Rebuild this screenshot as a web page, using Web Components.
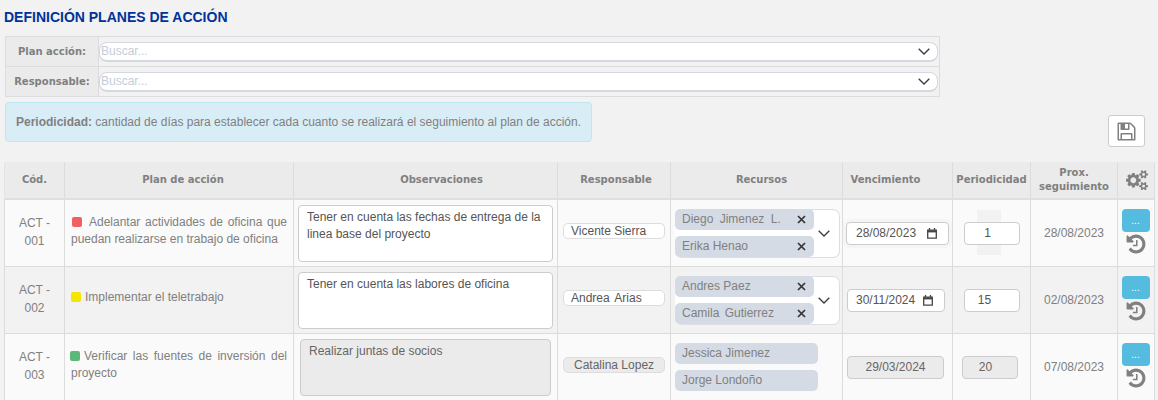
<!DOCTYPE html>
<html lang="es">
<head>
<meta charset="utf-8">
<title>Definición planes de acción</title>
<style>
  html, body { margin: 0; background: #f2f2f2; }
  body { font: 12px/17px "Liberation Sans", Arial, sans-serif; color: #808080; height: 400px; overflow: hidden; }
</style>
</head>
<body>
<plan-page>
  <span slot="title">DEFINICIÓN PLANES DE ACCIÓN</span>

  <filter-row slot="filters" label="Plan acción:"></filter-row>
  <filter-row slot="filters" label="Responsable:"></filter-row>

  <info-alert slot="alert"><b>Periodicidad:</b> cantidad de días para establecer cada cuanto se realizará el seguimiento al plan de acción.</info-alert>
  <save-button slot="save"></save-button>

  <plan-head slot="table"></plan-head>

  <plan-row slot="table">
    <span slot="cod">ACT -<br>001</span>
    <plan-text color="#f06060" gap="7" shift="1">Adelantar actividades de oficina que puedan realizarse en trabajo de oficina</plan-text>
    <obs-box slot="obs">Tener en cuenta las fechas de entrega de la linea base del proyecto</obs-box>
    <resp-box slot="resp">Vicente Sierra</resp-box>
    <chip-list slot="rec">
      <res-chip removable style="word-spacing:3px">Diego Jimenez L.</res-chip>
      <res-chip removable>Erika Henao</res-chip>
    </chip-list>
    <date-box slot="venc" style="box-shadow:0 0 0 3px #f5f5f5">28/08/2023</date-box>
    <num-box slot="per" patch>1</num-box>
    <span slot="prox">28/08/2023</span>
  </plan-row>

  <plan-row slot="table" alt>
    <span slot="cod">ACT -<br>002</span>
    <plan-text color="#f5e600" gap="4" shift="0">Implementar el teletrabajo</plan-text>
    <obs-box slot="obs">Tener en cuenta las labores de oficina</obs-box>
    <resp-box slot="resp" style="word-spacing:2px">Andrea Arias</resp-box>
    <chip-list slot="rec">
      <res-chip removable>Andres Paez</res-chip>
      <res-chip removable style="word-spacing:2px">Camila Gutierrez</res-chip>
    </chip-list>
    <date-box slot="venc" style="width:98px;margin-left:1px;padding-left:8px;padding-right:11px">30/11/2024</date-box>
    <num-box slot="per" style="padding-right:14px">15</num-box>
    <span slot="prox">02/08/2023</span>
  </plan-row>

  <plan-row slot="table">
    <span slot="cod">ACT -<br>003</span>
    <plan-text color="#5cb878" gap="4" shift="-1">Verificar las fuentes de inversión del proyecto</plan-text>
    <obs-box slot="obs" disabled>Realizar juntas de socios</obs-box>
    <resp-box slot="resp" disabled>Catalina Lopez</resp-box>
    <chip-list slot="rec" disabled>
      <res-chip>Jessica Jimenez</res-chip>
      <res-chip>Jorge Londoño</res-chip>
    </chip-list>
    <date-box slot="venc" disabled style="width:97px;margin-left:1px">29/03/2024</date-box>
    <num-box slot="per" disabled>20</num-box>
    <span slot="prox">07/08/2023</span>
  </plan-row>
</plan-page>

<script>
const HISTORY_PATH = 'M1664 896q0 156-61 298t-164 245-245 164-298 61q-172 0-327-72.5t-264-204.5q-7-10-6.5-22.5t8.5-20.5l137-138q10-9 25-9 16 2 23 12 73 95 179 147t225 52q104 0 198.5-40.5t163.5-109.5 109.5-163.5 40.5-198.5-40.5-198.5-109.5-163.5-163.5-109.5-198.5-40.5q-98 0-188 35.5t-160 101.5l137 138q31 30 14 69-17 40-59 40h-448q-26 0-45-19t-19-45v-448q0-42 40-59 39-17 69 14l130 129q107-101 244.5-156.5t284.5-55.5q156 0 298 61t245 164 164 245 61 298zm-640-288v448q0 14-9 23t-23 9h-320q-14 0-23-9t-9-23v-64q0-14 9-23t23-9h224v-352q0-14 9-23t23-9h64q14 0 23 9t9 23z'
const SAVE_PATH = 'M512 1536h768v-384h-768v384zm896 0h128v-896q0-14-10-38.5t-20-34.5l-281-281q-10-10-34-20t-39-10v416q0 40-28 68t-68 28h-576q-40 0-68-28t-28-68v-416h-128v1280h128v-416q0-40 28-68t68-28h832q40 0 68 28t28 68v416zm-384-928v-320q0-13-9.5-22.5t-22.5-9.5h-192q-13 0-22.5 9.5t-9.5 22.5v320q0 13 9.5 22.5t22.5 9.5h192q13 0 22.5-9.5t9.5-22.5zm640 32v928q0 40-28 68t-68 28h-1344q-40 0-68-28t-28-68v-1344q0-40 28-68t68-28h928q40 0 88 20t76 48l280 280q28 28 48 76t20 88z'
const COGS_PATH = 'M896 896q0-106-75-181t-181-75-181 75-75 181 75 181 181 75 181-75 75-181zm768 512q0-52-38-90t-90-38-90 38-38 90q0 53 37.5 90.5t90.5 37.5 90.5-37.5 37.5-90.5zm0-1024q0-52-38-90t-90-38-90 38-38 90q0 53 37.5 90.5t90.5 37.5 90.5-37.5 37.5-90.5zm-384 421v185q0 10-7 19.5t-16 10.5l-155 24q-11 35-32 76 34 48 90 115 7 11 7 20 0 12-7 19-23 30-82.5 89.5t-78.5 59.5q-11 0-21-7l-115-90q-37 19-77 31-11 108-23 155-7 24-30 24h-186q-11 0-20-7.5t-10-17.5l-23-153q-34-10-75-31l-118 89q-7 7-20 7-11 0-21-8-144-133-144-160 0-9 7-19 10-14 41-53t47-61q-23-44-35-82l-152-24q-10-1-17-9.5t-7-19.5v-185q0-10 7-19.5t16-10.5l155-24q11-35 32-76-34-48-90-115-7-11-7-20 0-12 7-20 22-30 82-89t79-59q11 0 21 7l115 90q34-18 77-32 11-108 23-154 7-24 30-24h186q11 0 20 7.5t10 17.5l23 153q34 10 75 31l118-89q8-7 20-7 11 0 21 8 144 133 144 160 0 8-7 19-12 16-42 54t-45 60q23 48 34 82l152 23q10 2 17 10.5t7 19.5zm640 533v140q0 16-149 31-12 27-30 52 51 113 51 138 0 4-4 7-122 71-124 71-8 0-46-47t-52-68q-20 2-30 2t-30-2q-14 21-52 68t-46 47q-2 0-124-71-4-3-4-7 0-25 51-138-18-25-30-52-149-15-149-31v-140q0-16 149-31 13-29 30-52-51-113-51-138 0-4 4-7 4-2 35-20t59-34 30-16q8 0 46 46.5t52 67.5q20-2 30-2t30 2q51-71 92-112l6-2q4 0 124 70 4 3 4 7 0 25-51 138 17 23 30 52 149 15 149 31zm0-1024v140q0 16-149 31-12 27-30 52 51 113 51 138 0 4-4 7-122 71-124 71-8 0-46-47t-52-68q-20 2-30 2t-30-2q-14 21-52 68t-46 47q-2 0-124-71-4-3-4-7 0-25 51-138-18-25-30-52-149-15-149-31v-140q0-16 149-31 13-29 30-52-51-113-51-138 0-4 4-7 4-2 35-20t59-34 30-16q8 0 46 46.5t52 67.5q20-2 30-2t30 2q51-71 92-112l6-2q4 0 124 70 4 3 4 7 0 25-51 138 17 23 30 52 149 15 149 31z'
const COLUMNS = '60px 229px 264px 113px 172px 110px 78px 87px 37px'
const CHEVRON = `<svg width="12" height="7" viewBox="0 0 12 7" fill="none" stroke="#3a3f47" stroke-width="1.4"><path d="M.7.8 6 6 11.3.8"/></svg>`

class PlanPage extends HTMLElement {
    constructor() {
        super()
        this.attachShadow({ mode: 'open' })
    }
    connectedCallback() {
        this.shadowRoot.innerHTML = /*html*/`
        <style>
            :host { display: block; padding: 8px 3px 0 4px; }
            .title { font: bold 14px/18px "Liberation Sans", Arial, sans-serif; color: #003399; }
            .filters { width: 935px; margin: 10px 0 5px 1px; border: 1px solid #dcdcdc; border-bottom: 0; box-sizing: border-box; }
            .bar { display: flex; justify-content: space-between; align-items: flex-start; margin-left: 1px; height: 60px; }
            .table { display: block; }
        </style>
        <div class="title"><slot name="title"></slot></div>
        <div class="filters"><slot name="filters"></slot></div>
        <div class="bar"><slot name="alert"></slot><slot name="save"></slot></div>
        <div class="table"><slot name="table"></slot></div>
        `
    }
}

class FilterRow extends HTMLElement {
    constructor() {
        super()
        this.attachShadow({ mode: 'open' })
    }
    connectedCallback() {
        this.shadowRoot.innerHTML = /*html*/`
        <style>
            :host { display: grid; grid-template-columns: 93px 1fr; height: 30px; border-bottom: 1px solid #dcdcdc; box-sizing: border-box; }
            .label { background: #ebebeb; border-right: 1px solid #dcdcdc; display: flex; align-items: center; justify-content: center;
                     font: bold 10px "DejaVu Sans", Verdana, sans-serif; color: #808080; }
            .cell { display: flex; align-items: center; padding-right: 1px; }
            .box { flex: 1; box-sizing: border-box; height: 20px; background: #fff; border: 1px solid #d5d8e0; border-width: 1px 1px 2px 1px; border-radius: 8px;
                   display: flex; align-items: center; justify-content: space-between; padding: 0 8px 0 1px; color: #c5ccd8; font-size: 12px; }
            .box svg { margin-right: -1px; }
        </style>
        <div class="label">${this.getAttribute('label')}</div>
        <div class="cell"><div class="box"><span>Buscar...</span>${CHEVRON}</div></div>
        `
    }
}

class InfoAlert extends HTMLElement {
    constructor() {
        super()
        this.attachShadow({ mode: 'open' })
    }
    connectedCallback() {
        this.shadowRoot.innerHTML = /*html*/`
        <style>
            :host { display: flex; align-items: center; box-sizing: border-box; width: 587px; height: 40px; padding: 0 10px;
                    background: #d9edf7; border: 1px solid #bce8f1; border-radius: 4px; color: #808080; font-size: 12px; white-space: nowrap; }
            ::slotted(b) { color: #808080; }
        </style>
        <span><slot></slot></span>
        `
    }
}

class SaveButton extends HTMLElement {
    constructor() {
        super()
        this.attachShadow({ mode: 'open' })
    }
    connectedCallback() {
        this.shadowRoot.innerHTML = /*html*/`
        <style>
            :host { display: flex; align-items: center; justify-content: center; box-sizing: border-box; width: 37px; height: 32px;
                    margin: 13px 10px 0 0; background: #fff; border: 1px solid #ccc; border-radius: 3px; }
        </style>
        <svg width="21" height="21" viewBox="0 0 1792 1792" fill="#808080"><path d="${SAVE_PATH}"/></svg>
        `
    }
}

class PlanHead extends HTMLElement {
    constructor() {
        super()
        this.attachShadow({ mode: 'open' })
    }
    connectedCallback() {
        const titles = ['Cód.', 'Plan de acción', 'Observaciones', 'Responsable', 'Recursos', 'Vencimiento', 'Periodicidad', 'Prox. seguimiento']
        this.shadowRoot.innerHTML = /*html*/`
        <style>
            :host { display: grid; grid-template-columns: ${COLUMNS}; height: 38px; background: #ebebeb; border-bottom: 2px solid #dfdfdf; box-sizing: border-box; width: 1151px; border-left: 1px solid #e4e4e4; border-right: 1px solid #ddd; }
            div { display: flex; align-items: center; justify-content: center; text-align: center; box-sizing: border-box;
                  border-right: 1px solid #dcdcdc; font: bold 10px/14px "DejaVu Sans", Verdana, sans-serif; color: #808080; }
            .plan { padding-left: 8px; }
            .obs { padding-left: 32px; }
            .resp { padding-left: 4px; }
            .rec { padding-left: 10px; }
            .venc { padding-right: 24px; }
            div:last-child { border-right: 0; }
        </style>
        ${titles.map((t, i) => `<div class="${['', 'plan', 'obs', 'resp', 'rec', 'venc', '', ''][i]}">${t}</div>`).join('')}
        <div><svg width="22" height="20.5" viewBox="0 0 1920 1792" fill="#808080"><path d="${COGS_PATH}"/></svg></div>
        `
    }
}

class PlanRow extends HTMLElement {
    constructor() {
        super()
        this.attachShadow({ mode: 'open' })
    }
    connectedCallback() {
        this.shadowRoot.innerHTML = /*html*/`
        <style>
            :host { display: grid; grid-template-columns: ${COLUMNS}; height: 67px; box-sizing: border-box; width: 1151px;
                    background: #fafafa; border: 1px solid #dcdcdc; border-width: 0 1px 1px 1px; font-size: 12px; line-height: 17px; }
            :host([alt]) { background: #f2f2f2; }
            .c { display: flex; align-items: center; justify-content: center; box-sizing: border-box; border-right: 1px solid #dcdcdc; min-width: 0; isolation: isolate; }
            .c:last-child { border-right: 0; }
            .cod { text-align: center; line-height: 17.5px; padding-bottom: 1px; }
            .plan { justify-content: stretch; padding: 0 6px 4px; }
            .rec { justify-content: flex-start; padding-left: 4px; }
            .venc { justify-content: flex-start; padding-left: 3px; }
            .act { flex-direction: column; justify-content: flex-start; padding: 9px 2px 0 0; gap: 1px; }
            .more { width: 28px; height: 23px; border-radius: 4px; background: #55bcdf; color: #fff; font-size: 10px; line-height: 23px; text-align: center; }
        </style>
        <div class="c cod"><slot name="cod"></slot></div>
        <div class="c plan"><slot></slot></div>
        <div class="c"><slot name="obs"></slot></div>
        <div class="c"><slot name="resp"></slot></div>
        <div class="c rec"><slot name="rec"></slot></div>
        <div class="c venc"><slot name="venc"></slot></div>
        <div class="c"><slot name="per"></slot></div>
        <div class="c"><slot name="prox"></slot></div>
        <div class="c act">
            <div class="more">...</div>
            <svg width="22" height="22" viewBox="0 0 1792 1792" fill="#808080"><path d="${HISTORY_PATH}"/></svg>
        </div>
        `
    }
}

class PlanText extends HTMLElement {
    constructor() {
        super()
        this.attachShadow({ mode: 'open' })
    }
    connectedCallback() {
        const gap = this.getAttribute('gap') || 4
        const shift = this.getAttribute('shift') || 0
        this.shadowRoot.innerHTML = /*html*/`
        <style>
            :host { display: block; flex: 1; text-align: justify; line-height: 17.5px; }
            i { display: inline-block; width: 10px; height: 10px; border-radius: 2px; margin: 0 ${gap}px 0 ${shift}px; background: ${this.getAttribute('color')}; vertical-align: -1px; }
        </style>
        <i></i><slot></slot>
        `
    }
}

class ObsBox extends HTMLElement {
    constructor() {
        super()
        this.attachShadow({ mode: 'open' })
    }
    connectedCallback() {
        this.shadowRoot.innerHTML = /*html*/`
        <style>
            :host { display: block; box-sizing: border-box; width: 255px; height: 57px; padding: 3px 8px; background: #fff; border: 1px solid #ccc; border-radius: 4px; color: #555; line-height: 17px; }
            :host([disabled]) { background: #ebebeb; color: #666; width: 251px; }
        </style>
        <slot></slot>
        `
    }
}

class RespBox extends HTMLElement {
    constructor() {
        super()
        this.attachShadow({ mode: 'open' })
    }
    connectedCallback() {
        this.shadowRoot.innerHTML = /*html*/`
        <style>
            :host { display: block; box-sizing: border-box; width: 102px; height: 16px; margin-bottom: 4px; padding: 0 7px; background: #fff; border: 1px solid #ddd; border-radius: 5px; color: #555; line-height: 14px; white-space: nowrap; }
            :host([disabled]) { background: #ebebeb; color: #666; padding: 0 10px; }
        </style>
        <slot></slot>
        `
    }
}

class ChipList extends HTMLElement {
    constructor() {
        super()
        this.attachShadow({ mode: 'open' })
    }
    connectedCallback() {
        const disabled = this.hasAttribute('disabled')
        this.shadowRoot.innerHTML = /*html*/`
        <style>
            :host { display: block; }
            .box { box-sizing: border-box; width: 165px; height: 49px; display: flex; align-items: center; justify-content: space-between; background: #fff; border: 1px solid #dcdee4; border-left: 0; border-radius: 7px; padding-right: 9px; }
            :host([disabled]) .box { background: none; border: 0; width: 161px; }
            .list { display: flex; flex-direction: column; gap: 6px; width: 139px; }
            :host([disabled]) .list { width: 143px; }
        </style>
        <div class="box"><div class="list"><slot></slot></div>${disabled ? '' : CHEVRON}</div>
        `
    }
}

class ResChip extends HTMLElement {
    constructor() {
        super()
        this.attachShadow({ mode: 'open' })
    }
    connectedCallback() {
        const x = this.hasAttribute('removable') ? '<svg width="9" height="9" viewBox="0 0 9 9" stroke="#333" stroke-width="1.7"><path d="M1 1l7 7M8 1 1 8"/></svg>' : ''
        this.shadowRoot.innerHTML = /*html*/`
        <style>
            :host { display: flex; align-items: center; justify-content: space-between; box-sizing: border-box; height: 21px; padding: 0 8px 0 7px; background: #d5dbe5; border-radius: 5px; color: #808080; white-space: nowrap; }
        </style>
        <span><slot></slot></span>${x}
        `
    }
}

class DateBox extends HTMLElement {
    constructor() {
        super()
        this.attachShadow({ mode: 'open' })
    }
    connectedCallback() {
        const icon = this.hasAttribute('disabled') ? '' : `<svg width="10" height="11" viewBox="0 0 10 11" fill="none" stroke="#444" stroke-width="1.3"><path d="M.7 2.2h8.6v8H.7z"/><path d="M.7 3.4h8.6" stroke-width="2"/><path d="M2.5 0v2M7.5 0v2"/></svg>`
        this.shadowRoot.innerHTML = /*html*/`
        <style>
            :host { display: flex; align-items: center; justify-content: space-between; box-sizing: border-box; width: 103px; height: 23px; padding: 0 11px 0 9px; background: #fff; border: 1px solid #ccc; border-radius: 4px; color: #555; }
            :host([disabled]) { background: #ebebeb; color: #666; justify-content: center; padding: 0; }
        </style>
        <span><slot></slot></span>${icon}
        `
    }
}

class NumBox extends HTMLElement {
    constructor() {
        super()
        this.attachShadow({ mode: 'open' })
    }
    connectedCallback() {
        this.shadowRoot.innerHTML = /*html*/`
        <style>
            :host { display: flex; align-items: center; justify-content: center; box-sizing: border-box; width: 56px; height: 23px; background: #fff; border: 1px solid #ccc; border-radius: 4px; color: #555; padding-right: 8px; position: relative; }
            :host([disabled]) { background: #ebebeb; color: #666; margin-right: 4px; }
            :host([patch])::before { content: ""; position: absolute; left: 12px; top: -13px; width: 24px; height: 45px; background: #f2f2f2; z-index: -1; }
        </style>
        <slot></slot>
        `
    }
}

customElements.define('plan-page', PlanPage)
customElements.define('filter-row', FilterRow)
customElements.define('info-alert', InfoAlert)
customElements.define('save-button', SaveButton)
customElements.define('plan-head', PlanHead)
customElements.define('plan-row', PlanRow)
customElements.define('plan-text', PlanText)
customElements.define('obs-box', ObsBox)
customElements.define('resp-box', RespBox)
customElements.define('chip-list', ChipList)
customElements.define('res-chip', ResChip)
customElements.define('date-box', DateBox)
customElements.define('num-box', NumBox)
</script>
</body>
</html>
